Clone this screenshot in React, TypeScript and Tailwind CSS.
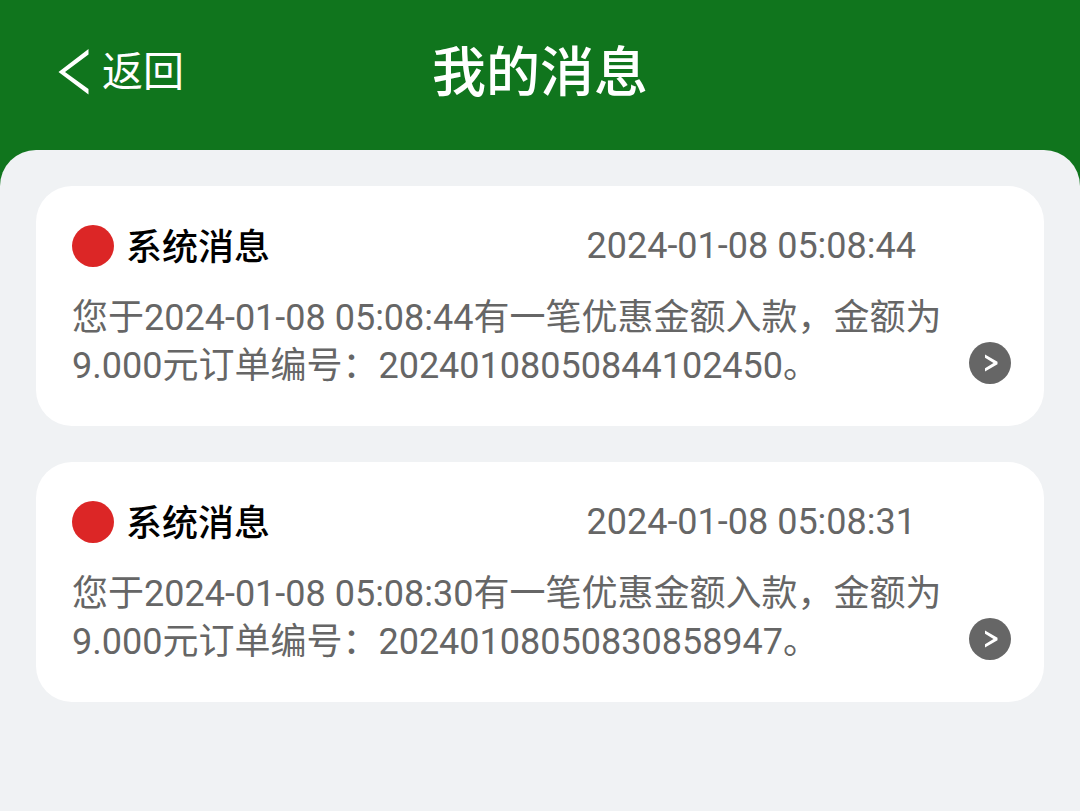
type Message = {
  title: string;
  time: string;
  body: string;
};

const messages: Message[] = [
  {
    title: "系统消息",
    time: "2024-01-08 05:08:44",
    body: "您于2024-01-08 05:08:44有一笔优惠金额入款，金额为9.000元订单编号：20240108050844102450。",
  },
  {
    title: "系统消息",
    time: "2024-01-08 05:08:31",
    body: "您于2024-01-08 05:08:30有一笔优惠金额入款，金额为9.000元订单编号：20240108050830858947。",
  },
];

function Header() {
  return (
    <header className="grid h-[186px] grid-cols-[1fr_auto_1fr] items-start px-14 pt-8 text-white">
      <button type="button" className="flex h-20 items-center gap-2.5 justify-self-start text-[41px] leading-none">
        <svg className="h-12 w-9" viewBox="0 0 36 48" fill="currentColor" aria-hidden="true">
          <path d="M2.5 24 32.500 1v5.500L9 24l23.500 17v5.500z" />
        </svg>
        返回
      </button>
      <h1 className="flex h-20 items-center pt-1 text-[54px] leading-none font-medium">我的消息</h1>
    </header>
  );
}

function MessageCard({ title, time, body }: Message) {
  return (
    <li className="rounded-[36px] bg-white py-9 pr-[33px] pl-9 text-[36px] text-[#666]">
      <div className="flex h-12 items-center">
        <span className="mr-3 size-[42px] rounded-full bg-[#dc2626]" />
        <h2 className="flex-1 pt-1 font-medium text-black">{title}</h2>
        <time className="mr-[95px]">{time}</time>
      </div>
      <div className="mt-6 flex items-end justify-between">
        <p className="max-w-[870px] flex-1 leading-12 break-all">{body}</p>
        <button type="button" aria-label="查看详情" className="mb-1.5 flex size-[42px] shrink-0 items-center justify-center rounded-full bg-[#666] text-white">
          <svg className="size-5" viewBox="0 0 20 20" fill="currentColor" aria-hidden="true">
            <path d="M5 1.500 17.500 8.800v2.400L5 18.500v-3.200L13.500 10 5 4.700z" />
          </svg>
        </button>
      </div>
    </li>
  );
}

export default function App() {
  return (
    <div className="flex min-h-screen flex-col bg-[#10751d] font-[Roboto,'Noto_Sans_CJK_SC',sans-serif]">
      <Header />
      <main className="-mt-9 flex-1 rounded-t-[36px] bg-[#f0f2f4] p-9">
        <ul className="flex flex-col gap-9">
          {messages.map((message) => (
            <MessageCard key={message.time} {...message} />
          ))}
        </ul>
      </main>
    </div>
  );
}
